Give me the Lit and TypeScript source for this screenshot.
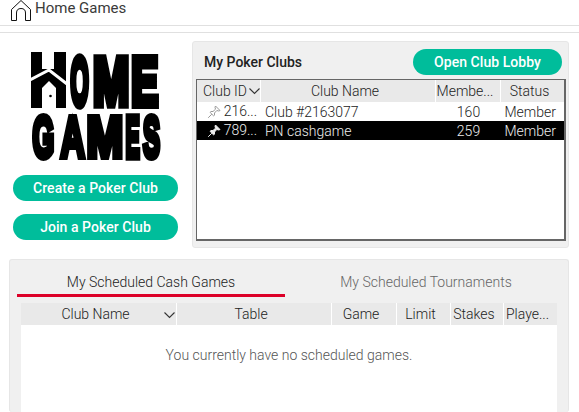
import { LitElement, html, css, svg } from "lit";
import { customElement } from "lit/decorators.js";

const chevron = svg`<path d="M.5 1.5 L5.5 6.5 L10.5 1.5" fill="none" stroke="#333" stroke-width="1.1"/>`;

const LOGO = [
  { t: "O", x: 69.5, sx: 0.345, y: 105, s: 68, sw: 6.5 },
  { t: "M", x: 92, sx: 0.64, y: 105, s: 68, sw: 6.5 },
  { t: "E", x: 130.2, sx: 0.595, y: 105, s: 68, sw: 6.5 },
  { t: "G", x: 31.5, sx: 0.48, y: 157, s: 58, sw: 5.5 },
  { t: "A", x: 59.5, sx: 0.58, y: 157, s: 58, sw: 5 },
  { t: "M", x: 85.5, sx: 0.76, y: 157, s: 58, sw: 5.5 },
  { t: "E", x: 124.5, sx: 0.37, y: 157, s: 58, sw: 5.5 },
  { t: "S", x: 142, sx: 0.44, y: 157, s: 58, sw: 5.5 },
];

@customElement("app-root")
export class AppRoot extends LitElement {
  static styles = css`
    :host { display: block; width: 579px; height: 412px; overflow: hidden; background: #fff; font-family: Roboto, sans-serif; color: #333; font-size: 14px; font-weight: 300; }
    .top { height: 25px; border-bottom: 1px solid #e0e0e0; display: flex; gap: 4px; padding-left: 11px; }
    .top svg { width: 20px; height: 21px; display: block; flex: none; }
    .top span { font-size: 15px; line-height: 17px; color: #3a3a3a; font-weight: 400; }
    .rule { height: 1px; margin-top: 6px; background: #e0e0e0; }
    .upper { display: flex; height: 207px; margin-top: 8px; padding: 0 10px 0 13px; }
    .left { width: 165px; flex: none; display: flex; flex-direction: column; align-items: center; gap: 13px; }
    .logo { width: 132px; height: 112px; margin-top: 9px; display: block; flex: none; filter: grayscale(1); }
    .logo text { font-family: "Liberation Sans", sans-serif; font-weight: 700; fill: #000; stroke: #000; stroke-linejoin: miter; vector-effect: non-scaling-stroke; }
    .btn { background: #00bd9b; color: #fff; font-weight: 500; font-size: 14px; letter-spacing: .05px; border-radius: 13px; height: 26px; line-height: 26px; text-align: center; flex: none; }
    .left .btn { width: 165px; }
    .panel { background: #f0f0f0; border: 1px solid #e6e6e6; border-radius: 3px; box-sizing: border-box; }
    .clubs { margin-left: 14px; flex: 1; padding: 7px 2px 6px 3px; display: flex; flex-direction: column; }
    .clubs-head { display: flex; justify-content: space-between; align-items: center; height: 26px; padding: 0 4px 0 8px; margin-bottom: 4px; flex: none; }
    .clubs-head b { font-weight: 500; font-size: 14px; color: #222; }
    .clubs-head .btn { width: 149px; }
    .tbl { flex: 1; background: #fff; border: 1px solid #666; border-right-width: 2px; border-bottom-width: 2px; overflow: hidden; }
    .hdr { display: grid; height: 22px; background: #fff; gap: 1px; }
    .hdr > div { background: #e9e9e9; line-height: 22px; white-space: nowrap; overflow: hidden; display: flex; align-items: center; justify-content: center; padding-right: 6px; color: #222; }
    .hdr svg { width: 11px; height: 8px; flex: none; }
    .c1 { grid-template-columns: 63px 174px 64px 63px; }
    .c1 .cid { justify-content: flex-start; padding: 0 0 0 6px; gap: 2px; }
    .row { display: grid; grid-template-columns: 64px 174px 64px 65px; height: 19px; line-height: 21px; color: #222; }
    .row.sel { background: #000; color: #eee; }
    .id { display: flex; align-items: center; justify-content: flex-end; padding-right: 4px; gap: 3px; height: 19px; }
    .id svg { width: 14px; height: 14px; flex: none; }
    .name { padding-left: 4px; }
    .num { text-align: center; padding-left: 3px; }
    .st { text-align: right; padding-right: 8px; }
    .lower { margin: 11px 10px 0 9px; height: 153px; padding: 0 11px; border-bottom: none; display: flex; flex-direction: column; }
    .tabs { display: flex; height: 37px; margin: 0 -10px 6px -4px; flex: none; }
    .tab { text-align: center; padding-top: 13px; line-height: 18px; }
    .tab.on { width: 268px; height: 21px; border-bottom: 3px solid #dc0028; color: #222; }
    .tab.off { flex: 1; color: #666; }
    .c2 { grid-template-columns: 155px 154px 64px 53px 52px 53px; flex: none; }
    .c2 .cn { position: relative; }
    .c2 .cn svg { position: absolute; right: 1px; top: 8px; }
    .c2 .pl { justify-content: flex-start; padding: 0 0 0 2px; }
    .body { background: #fff; flex: 1; text-align: center; padding-top: 22px; color: #555; }
  `;

  private pin(color: string, filled: boolean) {
    return html`<svg viewBox="0 0 14 14"><path d="M8.5 1 L13 5.5 L11.8 6 L9.8 5.5 L7.5 8 L7.5 10.2 L6.5 10.8 L3.2 7.5 L3.8 6.5 L6 6.5 L8.5 4.2 L8 2.2 Z M4.8 9.2 L1.2 12.8" fill=${filled ? color : "none"} stroke=${color} stroke-width="1"/></svg>`;
  }

  render() {
    return html`
      <div class="top">
        <svg viewBox="0 0 20 21"><path d="M.5 20.5 V9.5 L10 .5 L19.5 9.5 V20.5 H14.5 V13 Q14.5 8.5 10 8.5 Q5.5 8.5 5.5 13 V20.5 Z" fill="#fff" stroke="#111"/></svg>
        <span>Home Games</span>
      </div>
      <div class="rule"></div>
      <div class="upper">
        <div class="left">
          <svg class="logo" viewBox="29 50 132 112" role="img" aria-label="Home Games">
            <path d="M30 52 H41 V69 H53 V52 H65 V108 H30 Z" fill="#000"/>
            <path d="M29 80 L48 70 L66 84" fill="none" stroke="#fff" stroke-width="3"/>
            <path d="M41 108 V88 L48 81 L55 88 V108 Z" fill="#fff"/>
            <circle cx="49.5" cy="96" r="1.3" fill="#000"/>
            ${LOGO.map(
              (l) => svg`<text transform="translate(${l.x} ${l.y}) scale(${l.sx} 1)" font-size=${l.s} stroke-width=${l.sw}>${l.t}</text>`
            )}
          </svg>
          <div class="btn">Create a Poker Club</div>
          <div class="btn">Join a Poker Club</div>
        </div>
        <div class="panel clubs">
          <div class="clubs-head"><b>My Poker Clubs</b><div class="btn">Open Club Lobby</div></div>
          <div class="tbl">
            <div class="hdr c1">
              <div class="cid">Club ID<svg viewBox="0 0 11 8">${chevron}</svg></div>
              <div>Club Name</div><div>Membe...</div><div>Status</div>
            </div>
            <div class="row">
              <div class="id">${this.pin("#999", false)}<span>216...</span></div>
              <div class="name">Club #2163077</div><div class="num">160</div><div class="st">Member</div>
            </div>
            <div class="row sel">
              <div class="id">${this.pin("#eee", true)}<span>789...</span></div>
              <div class="name">PN cashgame</div><div class="num">259</div><div class="st">Member</div>
            </div>
          </div>
        </div>
      </div>
      <div class="panel lower">
        <div class="tabs">
          <div class="tab on">My Scheduled Cash Games</div>
          <div class="tab off">My Scheduled Tournaments</div>
        </div>
        <div class="hdr c2">
          <div class="cn">Club Name<svg viewBox="0 0 11 8">${chevron}</svg></div>
          <div>Table</div><div>Game</div><div>Limit</div><div>Stakes</div><div class="pl">Playe...</div>
        </div>
        <div class="body">You currently have no scheduled games.</div>
      </div>
    `;
  }
}
